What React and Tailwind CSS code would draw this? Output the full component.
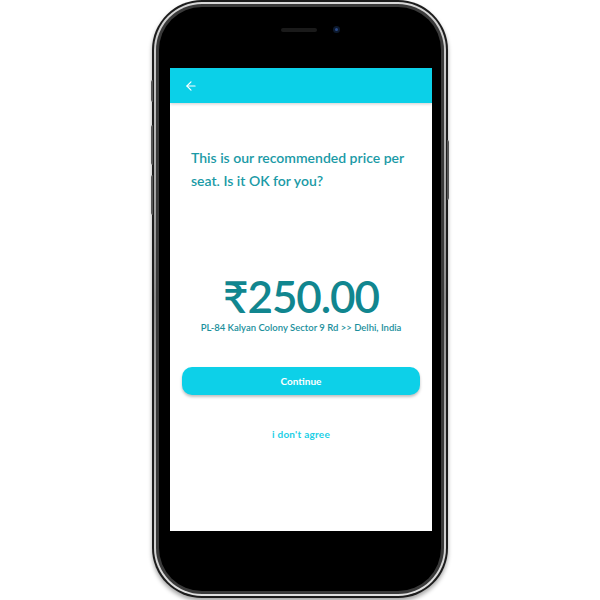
import { ArrowLeft } from "lucide-react";

export default function App() {
  return (
    <div className="w-[600px] h-[600px] bg-white flex justify-center" style={{ fontFamily: "Lato, 'Noto Sans', sans-serif" }}>
      {/* Phone */}
      <div className="relative w-[296px] h-[598px] rounded-[50px] bg-[#1c1c1c] p-[2px] shadow-[0_3px_4px_rgba(0,0,0,0.35)]">
        {/* side buttons */}
        <div className="absolute left-[-1px] top-[80px] w-[2px] h-[22px] bg-[#555] rounded-l" />
        <div className="absolute left-[-1px] top-[125px] w-[2px] h-[40px] bg-[#555] rounded-l" />
        <div className="absolute left-[-1px] top-[175px] w-[2px] h-[40px] bg-[#555] rounded-l" />
        <div className="absolute right-[-1px] top-[140px] w-[2px] h-[60px] bg-[#555] rounded-r" />
        <div className="w-full h-full rounded-[48px] bg-gradient-to-b from-[#d8d8d8] via-[#8a8a8a] to-[#e0e0e0] p-[2px]">
          <div className="w-full h-full rounded-[46px] bg-[#3a3a3a] p-[3px]">
            <div className="w-full h-full rounded-[43px] bg-black pt-[61px] pl-[11px] pr-[9px] pb-[60px] flex flex-col relative">
              {/* speaker + camera */}
              <div className="absolute top-[21px] left-[122px] w-[36px] h-[4px] rounded-full bg-[#1a1a1a]" />
              <div className="absolute top-[19px] left-[174px] w-[7px] h-[7px] rounded-full bg-[#0d1a2e] flex items-center justify-center">
                <div className="w-[3px] h-[3px] rounded-full bg-[#2a4a8a]" />
              </div>
              {/* Screen */}
              <div className="flex-1 bg-white flex flex-col">
                <div className="h-[35px] bg-[#0bd0e8] flex items-center pl-[14px] shadow-[0_1px_3px_rgba(0,0,0,0.2)]">
                  <ArrowLeft className="w-[14px] h-[14px] text-white" strokeWidth={2} />
                </div>
                <div className="flex flex-col px-[12px]">
                  <p className="mt-[43px] pl-[9px] text-[14px] leading-[23px] font-semibold text-[#1a9aa6]">
                    This is our recommended price per seat. Is it OK for you?
                  </p>
                  <div className="mt-[82px] text-center text-[44px] leading-[44px] font-semibold text-[#11868f] tracking-tight">
                    ₹250.00
                  </div>
                  <div className="mt-[3px] text-center text-[9.5px] font-semibold text-[#1a8f9c]">
                    PL-84 Kalyan Colony Sector 9 Rd &gt;&gt; Delhi, India
                  </div>
                  <button className="mt-[32px] h-[28px] rounded-[10px] bg-[#0dd0e8] text-white text-[10px] font-bold shadow-[0_2px_3px_rgba(0,0,0,0.25)]">
                    Continue
                  </button>
                  <div className="mt-[32px] text-center text-[10px] font-bold text-[#1ccfe6] tracking-wide">
                    i don't agree
                  </div>
                </div>
              </div>
            </div>
          </div>
        </div>
      </div>
    </div>
  );
}
